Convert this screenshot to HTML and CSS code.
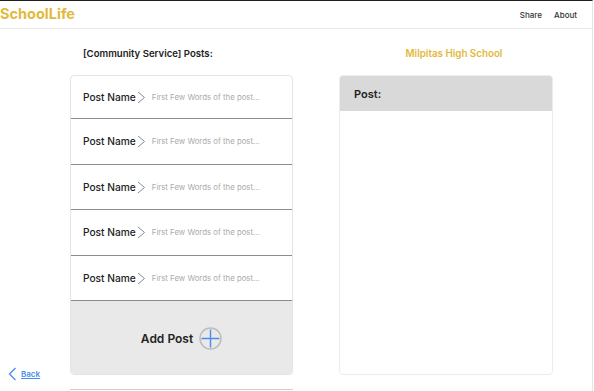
FILE: index.html
```html
<!DOCTYPE html>
<html>
<head>
  <meta charset="utf-8">
  <meta name="viewport" content="width=device-width, initial-scale=1, shrink-to-fit=no">
  <title>SchoolLife</title>
  <link rel="stylesheet" href="styles.css">
</head>
<body>
<div class="page">
  <header class="topbar">
    <div class="logo">SchoolLife</div>
    <nav class="nav">
      <a href="#">Share</a>
      <a href="#">About</a>
    </nav>
  </header>

  <main class="layout">
    <div class="side">
      <a class="back" href="#">
        <svg width="9" height="14" viewBox="0 0 9 14"><polyline points="7.5,1 1.5,7 7.5,13" fill="none" stroke="#4a8cf0" stroke-width="1.3"/></svg>
        <span>Back</span>
      </a>
    </div>

    <section class="col col-posts">
      <h4 class="col-title">[Community Service] Posts:</h4>
      <div class="card">
        <div class="row">
          <span class="row-name">Post Name</span>
          <svg class="chev" width="9" height="13" viewBox="0 0 9 13"><polyline points="1,1 7.5,6.5 1,12" fill="none" stroke="#8a8a8a" stroke-width="1"/></svg>
          <span class="row-preview">First Few Words of the post...</span>
        </div>
        <div class="row">
          <span class="row-name">Post Name</span>
          <svg class="chev" width="9" height="13" viewBox="0 0 9 13"><polyline points="1,1 7.5,6.5 1,12" fill="none" stroke="#8a8a8a" stroke-width="1"/></svg>
          <span class="row-preview">First Few Words of the post...</span>
        </div>
        <div class="row">
          <span class="row-name">Post Name</span>
          <svg class="chev" width="9" height="13" viewBox="0 0 9 13"><polyline points="1,1 7.5,6.5 1,12" fill="none" stroke="#8a8a8a" stroke-width="1"/></svg>
          <span class="row-preview">First Few Words of the post...</span>
        </div>
        <div class="row">
          <span class="row-name">Post Name</span>
          <svg class="chev" width="9" height="13" viewBox="0 0 9 13"><polyline points="1,1 7.5,6.5 1,12" fill="none" stroke="#8a8a8a" stroke-width="1"/></svg>
          <span class="row-preview">First Few Words of the post...</span>
        </div>
        <div class="row">
          <span class="row-name">Post Name</span>
          <svg class="chev" width="9" height="13" viewBox="0 0 9 13"><polyline points="1,1 7.5,6.5 1,12" fill="none" stroke="#8a8a8a" stroke-width="1"/></svg>
          <span class="row-preview">First Few Words of the post...</span>
        </div>
        <div class="add-post">
          <span>Add Post</span>
          <svg width="23" height="23" viewBox="0 0 23 23">
            <circle cx="11.5" cy="11.5" r="10.5" fill="none" stroke="#bdbdbd" stroke-width="1.5"/>
            <line x1="11.5" y1="2.5" x2="11.5" y2="20.5" stroke="#4a8cf0" stroke-width="1.4"/>
            <line x1="2.5" y1="11.5" x2="20.5" y2="11.5" stroke="#4a8cf0" stroke-width="1.4"/>
          </svg>
        </div>
      </div>
      <div class="next-card"></div>
    </section>

    <section class="col col-view">
      <h4 class="col-title school">Milpitas High School</h4>
      <div class="card view-card">
        <div class="view-head">Post:</div>
        <div class="view-body"></div>
      </div>
    </section>
  </main>
</div>
</body>
</html>
```

FILE: styles.css
```css
* {
  box-sizing: border-box;
}

body {
  margin: 0;
  font-family: Inter, "Liberation Sans", sans-serif;
  color: #222;
  background: #fff;
  overflow: hidden;
}

.page {
  width: 593px;
  height: 391px;
  border-right: 1px solid #e6e6e6;
  border-top: 1px solid #1e1e1e;
}

.topbar {
  height: 28px;
  display: flex;
  align-items: center;
  justify-content: space-between;
  border-bottom: 1px solid #e8e8e8;
}

.logo {
  font-size: 14.5px;
  font-weight: 700;
  color: #e2b93b;
  margin-top: -2px;
}

.nav {
  display: flex;
  gap: 12px;
  padding-right: 15px;
}

.nav a {
  font-size: 8px;
  font-weight: 500;
  color: #333;
  text-decoration: none;
}

.layout {
  display: grid;
  grid-template-columns: 70px 223px 260px;
  padding-top: 18px;
}

.col-view {
  padding-left: 46px;
}

.side {
  display: flex;
  align-items: flex-end;
  padding-left: 8px;
  height: 334px;
}

.back {
  display: flex;
  align-items: center;
  gap: 4px;
  color: #4a8cf0;
  font-size: 8px;
  font-weight: 600;
}

.back span {
  text-decoration: underline;
}

.col-title {
  margin: 0 0 14px;
  font-size: 9.6px;
  font-weight: 600;
  line-height: 14px;
  padding-left: 13px;
}

.school {
  font-size: 9.8px;
  color: #e2b93b;
  text-align: center;
  padding-left: 16px;
}

.card {
  border: 1px solid #e4e4e4;
  border-radius: 4px;
  overflow: hidden;
  background: #fff;
}

.row {
  height: 45.5px;
  display: flex;
  align-items: center;
  padding-left: 12px;
  border-bottom: 1px solid #8c8c8c;
}

.row:first-child {
  height: 43px;
  padding-top: 0;
}

.row-name {
  font-size: 10.2px;
  font-weight: 500;
  color: #222;
}

.chev {
  margin-left: 1px;
  margin-top: 1px;
}

.row-preview {
  margin-left: 6px;
  font-size: 7.8px;
  color: #ababab;
}

.add-post {
  height: 73px;
  background: #e9e9e9;
  display: flex;
  align-items: center;
  justify-content: center;
  gap: 6px;
  padding-top: 2px;
  font-size: 12px;
  font-weight: 600;
  color: #222;
}

.next-card {
  margin-top: 14px;
  border-top: 1px solid #cfcfcf;
}

.view-card {
  height: 300px;
  border-color: #ececec;
}

.view-head {
  height: 35px;
  background: #d9d9d9;
  display: flex;
  align-items: center;
  padding-left: 14px;
  font-size: 11px;
  font-weight: 600;
}
```
